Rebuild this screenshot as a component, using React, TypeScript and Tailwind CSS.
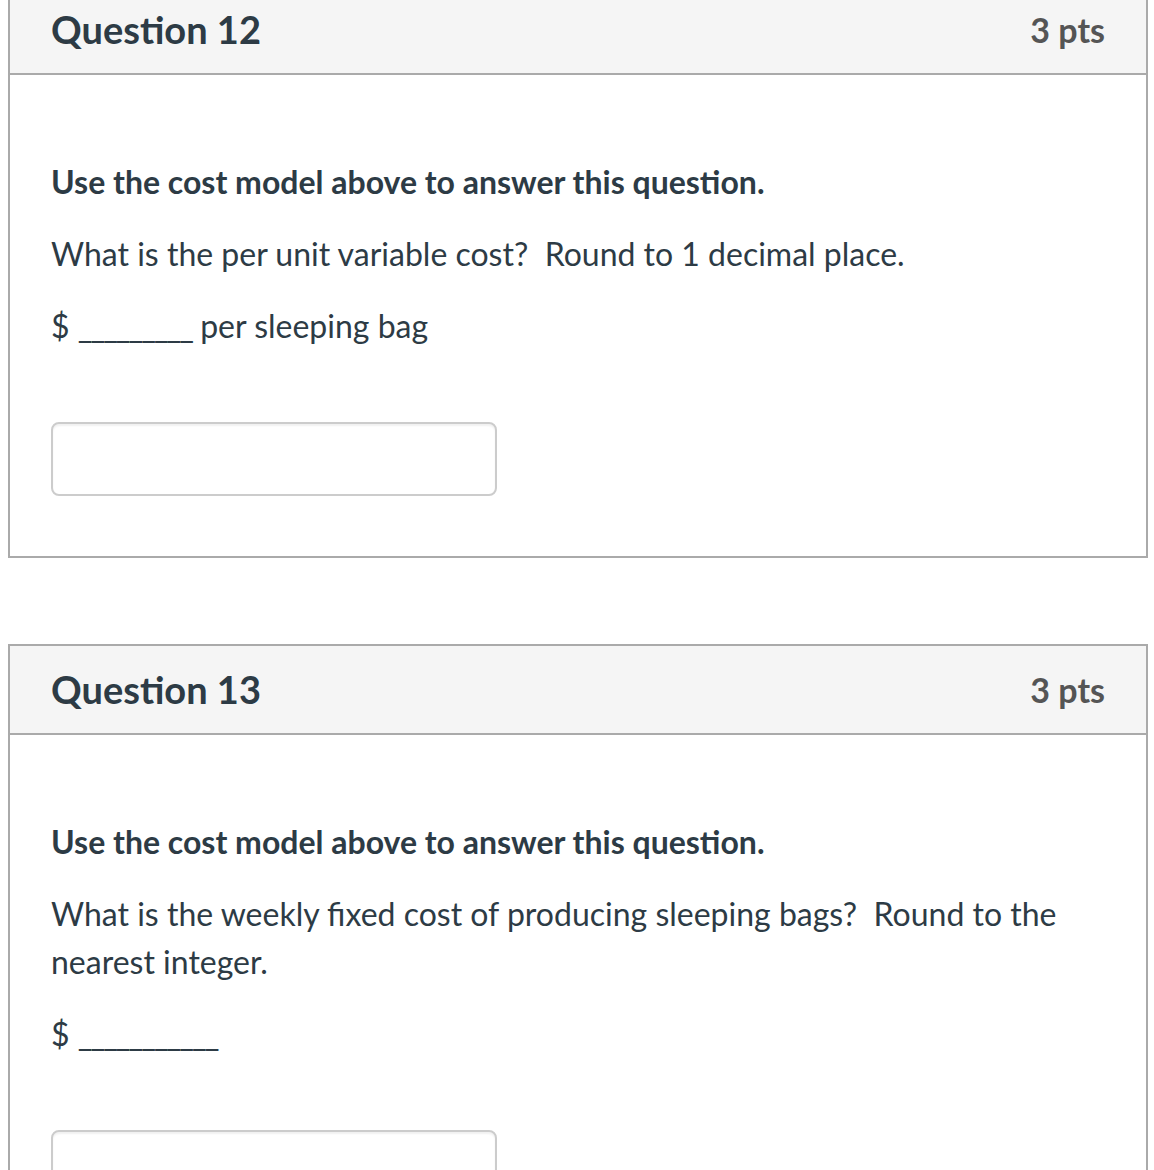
const font = { fontFamily: "Lato, 'Noto Sans', sans-serif" };

type QuestionProps = {
  number: number;
  points: string;
  children: React.ReactNode;
};

function QuestionCard({ number, points, children }: QuestionProps) {
  return (
    <div className="border-2 border-[#aaaaaa] bg-white">
      <div className="flex h-[89px] items-center justify-between border-b-2 border-[#aaaaaa] bg-[#f5f5f5] pl-[41px] pr-[41px]">
        <h2 className="text-[38px] font-bold text-[#2d3b45]">Question {number}</h2>
        <div className="text-[34px] font-bold text-[#555555]">{points}</div>
      </div>
      <div className="pl-[41px] pr-[41px] pt-[83px] pb-[60px] text-[32px] leading-[48px] text-[#2d3b45]">
        {children}
        <div className="mt-[72px] h-[74px] w-[446px] rounded-[8px] border-2 border-[#cccccc] bg-white shadow-[inset_0_2px_2px_rgba(0,0,0,0.06)]" />
      </div>
    </div>
  );
}

export default function App() {
  return (
    <div className="min-h-[1170px] bg-white pl-[8px] pr-[6px]" style={font}>
      <div className="-mt-[16px]">
        <QuestionCard number={12} points="3 pts">
          <p className="mb-[24px] font-bold">Use the cost model above to answer this question.</p>
          <p className="mb-[24px]">What is the per unit variable cost?&nbsp; Round to 1 decimal place.</p>
          <p>
            $ <span className="tracking-[-2px]">_________</span> per sleeping bag
          </p>
        </QuestionCard>
      </div>
      <div className="mt-[86px]">
        <QuestionCard number={13} points="3 pts">
          <p className="mb-[24px] font-bold">Use the cost model above to answer this question.</p>
          <p className="mb-[24px]">What is the weekly fixed cost of producing sleeping bags?&nbsp; Round to the nearest integer.</p>
          <p>
            $ <span className="tracking-[-2px]">___________</span>
          </p>
        </QuestionCard>
      </div>
    </div>
  );
}
